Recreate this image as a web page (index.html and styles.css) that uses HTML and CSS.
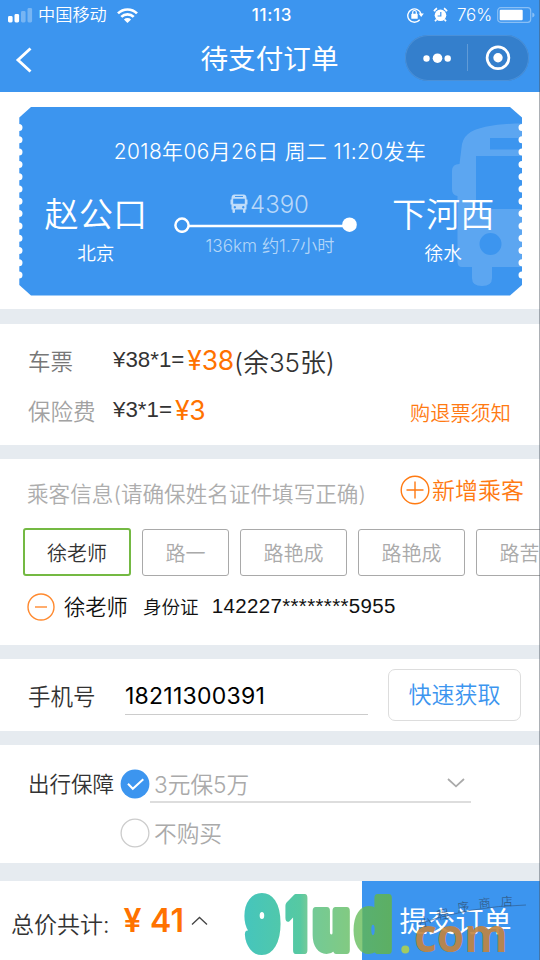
FILE: index.html
```
<!DOCTYPE html>
<html lang="zh-CN">
<head>
<meta charset="utf-8">
<title>待支付订单</title>
<link rel="stylesheet" href="styles.css">
</head>
<body>
<div class="screen">
  <header class="header">
    <div class="status">
      <div class="status-left">
        <svg width="25" height="15" viewBox="0 0 25 15" fill="#fff"><rect x="0" y="8" width="4.6" height="6.5" rx="1.4"/><rect x="6.5" y="6" width="4.6" height="8.5" rx="1.4"/><g opacity=".3"><rect x="13" y="3" width="4.6" height="11.5" rx="1.4"/><rect x="19.5" y="0" width="4.6" height="14.5" rx="1.4"/></g></svg>
        <span class="carrier">中国移动</span>
        <svg class="wifi" width="21" height="15" viewBox="0 0 21 15" fill="none" stroke="#fff" stroke-width="2.7"><path d="M1 5.4a13.5 13.5 0 0 1 19 0M4.3 8.9a8.8 8.8 0 0 1 12.4 0"/><path d="M6.9 11.4a5.1 5.1 0 0 1 7.2 0L10.500 15z" fill="#fff" stroke="none"/></svg>
      </div>
      <span class="clock">11:13</span>
      <div class="status-right">
        <svg width="17" height="16" viewBox="0 0 17 16"><path d="M12.700 12.800A6.700 6.700 0 1 1 14 7" fill="none" stroke="#fff" stroke-width="1.400"/><path d="M11.600 6.500h5.200l-2.600 3.400z" fill="#fff"/><rect x="4.300" y="6.800" width="6.400" height="5" rx=".6" fill="#fff"/><path d="M5.700 7V5.300a1.800 1.800 0 0 1 3.600 0V7" fill="none" stroke="#fff" stroke-width="1.200"/></svg>
        <svg class="alarm" width="15" height="16" viewBox="0 0 15 16"><circle cx="7.500" cy="8.300" r="5.800" fill="#fff"/><path d="M1 4.200a9 9 0 0 1 3-3M14 4.200a9 9 0 0 0-3-3M3.500 12.500 2 14.300M11.500 12.500l1.500 1.800" stroke="#fff" stroke-width="1.700" fill="none"/><path d="M7.800 5v4H4.600" stroke="#3c95ef" stroke-width="1.200" fill="none"/></svg>
        <span class="percent">76%</span>
        <svg width="38" height="16" viewBox="0 0 38 16"><rect x=".7" y=".7" width="33" height="14.600" rx="3" fill="none" stroke="#fff" stroke-opacity=".4" stroke-width="1.200"/><rect x="2.700" y="2.700" width="23" height="10.600" rx="1" fill="#fff"/><path d="M35.300 5.500q2.300.6 2.300 2.500t-2.300 2.500z" fill="#fff" opacity=".4"/></svg>
      </div>
    </div>
    <div class="nav">
      <svg class="back" width="18" height="28" viewBox="0 0 18 28"><path d="M15.500 2.500 3 14l12.500 11.500" fill="none" stroke="#fff" stroke-width="2.900"/></svg>
      <h1>待支付订单</h1>
      <div class="capsule">
        <svg width="124" height="46" viewBox="0 0 124 46" fill="#fff"><circle cx="21.500" cy="23.500" r="3.200"/><circle cx="32.500" cy="23.200" r="4.800"/><circle cx="42.700" cy="23.500" r="3.200"/><path d="M62.500 9v27" stroke="#fff" stroke-opacity=".22"/><circle cx="93" cy="22.800" r="10.900" fill="none" stroke="#fff" stroke-width="2.700"/><circle cx="93" cy="22.800" r="4.700"/></svg>
      </div>
    </div>
  </header>

  <section class="trip">
    <div class="ticket">
      <svg class="ticket-bg" width="503" height="189" viewBox="0 0 503 189">
        <path d="M12 0H491L503 10.500V178L491 188.500H12L.3 178V10.500z" fill="#3c95ef"/>
        <path fill="#fff" fill-opacity=".17" fill-rule="evenodd" d="M503 16.500C485 16.500 458 19 449 27Q443 32 442.500 41L440.500 57Q433 57 433 64V82Q433 88 438.500 89L438.500 137V155Q438.500 160 443 160H453V171Q453 179 463 179Q473 179 473 171V160H503V102H457V49H503V42.500H471V31H503zM482.500 137a11 11 0 1 1-22 0a11 11 0 1 1 22 0z"/>
        <path d="M0 20.500V170M503 20.500V170" stroke="#fff" stroke-width="7" stroke-linecap="round" stroke-dasharray="0 12.300"/>
      </svg>
      <div class="depart">2018年06月26日 周二 11:20发车</div>
      <div class="route">
        <div class="place"><div class="station">赵公口</div><div class="city">北京</div></div>
        <div class="leg">
          <div class="bus-no">
            <svg width="18" height="20" viewBox="0 0 18 20"><path fill="#fff" fill-opacity=".68" fill-rule="evenodd" d="M4.500.5h9Q16.500.5 16.500 4v1.500h1v5h-1V15.500h-1V18q0 1-1.200 1T13 18v-2.500H5V18q0 1-1.300 1T2.500 18v-2.500h-1v-5h-1v-5h1V4Q1.500.5 4.500.5zM5 2v1h8V2zM3.200 4.700v5h11.600v-5zM4.800 12a1.200 1.200 0 1 0 .1 0zM13.200 12a1.200 1.200 0 1 0 .1 0z"/></svg>
            <span>4390</span>
          </div>
          <svg class="leg-line" width="184" height="16" viewBox="0 0 184 16"><path d="M14 9H170" stroke="#fff" stroke-width="2.600"/><circle cx="8" cy="8.200" r="6.600" fill="none" stroke="#fff" stroke-width="2.500"/><circle cx="175.500" cy="7.700" r="7.300" fill="#fff"/></svg>
          <div class="distance">136km 约1.7小时</div>
        </div>
        <div class="place"><div class="station">下河西</div><div class="city">徐水</div></div>
      </div>
    </div>
  </section>

  <section class="fees">
    <div class="fee"><span class="label dark">车票</span><span class="calc">¥38*1=</span><span class="price">¥38</span><span class="remain">(余35张)</span></div>
    <div class="fee second"><span class="label">保险费</span><span class="calc">¥3*1=</span><span class="price">¥3</span><a class="notice">购退票须知</a></div>
  </section>

  <section class="passengers">
    <div class="pass-head">
      <span class="hint">乘客信息(请确保姓名证件填写正确)</span>
      <a class="add"><svg width="30" height="30" viewBox="0 0 30 30" fill="none" stroke="#ff7a12" stroke-width="1.400"><circle cx="15" cy="15" r="13.800"/><path d="M6.500 15h17M15 6.500v17"/></svg><span>新增乘客</span></a>
    </div>
    <div class="tabs">
      <div class="tab active">徐老师</div><div class="tab">路一</div><div class="tab">路艳成</div><div class="tab">路艳成</div><div class="tab">路苦</div>
    </div>
    <div class="person">
      <svg width="28" height="28" viewBox="0 0 28 28" fill="none" stroke="#ff8a30" stroke-width="1.400"><circle cx="14" cy="14" r="13"/><path d="M8 14h12"/></svg>
      <span class="name">徐老师</span><span class="id-type">身份证</span><span class="id-no">142227********5955</span>
    </div>
  </section>

  <section class="phone">
    <span class="label black">手机号</span>
    <div class="phone-no">18211300391</div>
    <div class="quick">快速获取</div>
  </section>

  <section class="insurance">
    <span class="ins-title">出行保障</span>
    <div class="options">
      <div class="option">
        <svg width="30" height="30" viewBox="0 0 30 30"><circle cx="15" cy="15" r="14.400" fill="#3c95ef"/><path d="m8 14.800 4.800 5L23.300 10.300" fill="none" stroke="#fff" stroke-width="2"/></svg>
        <div class="select"><span>3元保5万</span><svg width="18" height="10" viewBox="0 0 18 10"><path d="m1 1 8 7.300L17 1" fill="none" stroke="#aaa" stroke-width="1.800"/></svg></div>
      </div>
      <div class="option none">
        <svg width="30" height="30" viewBox="0 0 30 30"><circle cx="15" cy="15" r="13.900" fill="none" stroke="#ccc" stroke-width="1.300"/></svg>
        <span class="no-buy">不购买</span>
      </div>
    </div>
  </section>

  <footer class="footer">
    <span class="total-label">总价共计:</span><span class="total">¥ 41</span>
    <svg class="up" width="17" height="10" viewBox="0 0 17 10"><path d="m1 8.500 7.500-7L16 8.500" fill="none" stroke="#444" stroke-width="1.300"/></svg>
    <div class="submit">提交订单</div>
    <svg class="watermark" width="300" height="79" viewBox="240 881 300 79">
      <defs><linearGradient id="brand" gradientUnits="userSpaceOnUse" x1="243" y1="0" x2="393" y2="0"><stop offset="0" stop-color="#45c5bd"/><stop offset=".38" stop-color="#56c9a2"/><stop offset=".42" stop-color="#70ca9a"/><stop offset=".79" stop-color="#87ca7b"/><stop offset=".8" stop-color="#59b071"/><stop offset="1" stop-color="#5daf62"/></linearGradient></defs>
      <g class="brand" fill="url(#brand)" stroke="url(#brand)">
        <text x="245.500" y="949.500" textLength="34" lengthAdjust="spacingAndGlyphs">9</text>
        <text x="286" y="949.500" textLength="21" lengthAdjust="spacingAndGlyphs">1</text>
        <text x="313" y="949.500" textLength="36.500" lengthAdjust="spacingAndGlyphs">u</text>
        <text x="355" y="949.500" textLength="36.500" lengthAdjust="spacingAndGlyphs">d</text>
      </g>
      <circle cx="405.300" cy="949.500" r="4" fill="#a2ca62"/>
      <text class="com" x="414" y="951.500" textLength="94" lengthAdjust="spacingAndGlyphs">com</text>
      <g class="shop"><text transform="translate(420 927) rotate(-12)">小</text><text transform="translate(438 920) rotate(-12)">程</text><text transform="translate(458 912) rotate(-8)">序</text><text transform="translate(479 908) rotate(-5)">商</text><text transform="translate(501 906) rotate(-3)">店</text></g>
      <path d="M418 924Q470 906 526 905" stroke="#315f91" stroke-width=".7" fill="none"/>
    </svg>
  </footer>
  <div class="edge"></div>
</div>
</body>
</html>
```
FILE: styles.css
```
* { box-sizing: border-box; }
body { margin: 0; font-family: Inter, "Noto Sans CJK SC", sans-serif; font-weight: 350; background: #e6ebf0; }
svg { display: block; flex: none; }
.screen { position: relative; width: 540px; height: 960px; overflow: hidden; display: flex; flex-direction: column; white-space: nowrap; }
.screen > section, .header, .footer { flex: none; }
section { background: #fff; }

.header { height: 92px; background: #3c95ef; color: #fff; }
.status { height: 30px; display: grid; grid-template-columns: 1fr auto 1fr; align-items: center; padding: 0 4px 0 8px; }
.status-left, .status-right { display: flex; align-items: center; }
.status-right { justify-content: flex-end; margin-right: 1px; }
.carrier { font-size: 17.200px; line-height: 24px; margin: 0 0 0 5px; }
.wifi { margin-left: 10px; }
.clock { font-size: 17px; font-weight: 500; letter-spacing: .7px; }
.alarm { margin-left: 9px; }
.percent { font-size: 17px; letter-spacing: -.1px; margin: 0 5px 0 9px; }
.nav { position: relative; height: 58px; display: flex; align-items: center; justify-content: center; }
.nav h1 { margin: 0 1px 0 0; font-size: 27.600px; font-weight: 400; line-height: 40px; }
.back { position: absolute; left: 15px; top: 16px; }
.capsule { position: absolute; left: 405px; top: 5px; width: 124px; height: 46px; border-radius: 23px; background: #347fcc; box-shadow: inset 0 0 0 1px #4a90d8; }

.trip { height: 217px; padding: 14.500px 18.500px 0; margin-bottom: 15px; }
.ticket { position: relative; height: 189px; padding-top: 30px; color: #fff; }
.ticket-bg { position: absolute; left: 0; top: 0; }
.depart, .route { position: relative; }
.depart { font-size: 20.900px; letter-spacing: .4px; line-height: 30px; text-align: center; }
.route { display: flex; justify-content: space-between; padding: 23px 27px 0 26px; }
.place { text-align: center; }
.station { font-size: 34.200px; line-height: 50px; }
.city { font-size: 18.600px; line-height: 26px; }
.leg { display: flex; flex-direction: column; align-items: center; margin: 1px 4px 0 -4px; }
.leg-line { transform: translateY(-1px); }
.bus-no { display: flex; align-items: center; font-size: 24px; line-height: 27px; color: #b9d8f9; gap: 2px; margin-left: 8px; }
.distance { font-size: 17.200px; line-height: 24px; color: #b3d5f8; margin-left: 9px; }

.fees { height: 121px; margin-bottom: 14px; padding: 11px 29px 0 28px; }
.fee { display: flex; align-items: center; height: 50px; }
.label { width: 85px; font-size: 22.500px; color: #a2a2a2; }
.label.dark { color: #777; }
.label.black { color: #333; width: 97px; }
.calc { font-family: "Liberation Sans", sans-serif; font-size: 22.300px; font-weight: 400; color: #333; }
.price { font-size: 26.500px; color: #ff7200; margin-left: 3px; font-weight: 400; letter-spacing: -.2px; }
.remain { font-size: 26px; letter-spacing: -.1px; color: #333; }
.notice { font-size: 20.200px; color: #ff7a12; margin-left: auto; padding-top: 4px; }

.passengers { height: 186px; margin-bottom: 14px; }
.pass-head { display: flex; justify-content: space-between; align-items: center; height: 62px; padding: 0 16px 0 27px; }
.hint { font-size: 21.600px; color: #adadad; padding-top: 4px; }
.add { display: flex; align-items: center; gap: 2px; font-size: 23px; color: #ff7a12; }
.add span { margin-top: -2px; }
.tabs { display: flex; align-items: flex-end; gap: 11px; height: 55px; padding-left: 23px; }
.tab { flex: none; height: 47px; line-height: 48px; padding: 0 22.500px; border: 1px solid #a9a9a9; border-radius: 3px; font-size: 20px; color: #aaa; }
.tab.active { height: 48px; padding: 0 22px; border: 2px solid #74b943; color: #333; }
.person { display: flex; align-items: center; height: 60px; padding-left: 27px; color: #111; }
.person svg { margin-top: 1px; }
.name { font-size: 21.300px; margin: -2px 0 0 9px; }
.id-type { font-size: 18.600px; margin: -2px 0 0 15px; }
.id-no { font-family: "Liberation Sans", sans-serif; font-weight: 400; font-size: 20.500px; letter-spacing: .35px; margin-left: 13px; }

.phone { display: flex; align-items: center; height: 72px; margin-bottom: 14px; padding-left: 28px; }
.phone-no { width: 243px; height: 40px; line-height: 42px; border-bottom: 1px solid #ccc; font-size: 23px; font-weight: 400; letter-spacing: .25px; color: #000; }
.quick { width: 133px; height: 52px; line-height: 50px; border: 1px solid #ddd; border-radius: 7px; margin-left: 20px; text-align: center; font-size: 23px; color: #3c95ef; }

.insurance { display: flex; height: 118px; margin-bottom: 18px; padding: 18px 0 0 28px; }
.ins-title { font-size: 21.500px; line-height: 42px; color: #333; width: 92px; }
.option { display: flex; align-items: center; color: #aaa; font-size: 22.700px; height: 42px; }
.select { display: flex; justify-content: space-between; align-items: center; width: 321px; height: 38px; border-bottom: 2px solid #ddd; padding: 0 6px 0 4px; }
.option.none { margin-top: 7px; }
.no-buy { font-size: 22.700px; margin: -2px 0 0 4px; }

.footer { position: relative; display: flex; align-items: center; height: 79px; background: #fff; padding-left: 11px; }
.total-label { font-size: 23px; color: #333; padding-top: 5px; }
.total { font-size: 32px; font-weight: 600; color: #ff7200; margin-left: 14px; letter-spacing: .2px; }
.up { margin-left: 7px; }
.submit { width: 178px; height: 79px; margin-left: auto; background: #3c95ef; color: #fff; font-size: 28px; line-height: 82px; font-weight: 400; text-align: center; padding-left: 9px; }
.watermark { position: absolute; left: 240px; top: 0; }
.brand { font-family: Inter, sans-serif; font-weight: 900; font-size: 72px; stroke-width: 8px; stroke-linejoin: round; }
.com { font-family: "Open Sans", sans-serif; font-weight: 700; font-size: 46px; fill: #c28440; fill-opacity: .92; }
.shop text { font-family: "Noto Sans CJK SC", sans-serif; font-weight: 300; font-size: 12px; fill: #315174; }
.edge { position: absolute; right: 0; top: 0; width: 1px; height: 960px; background: rgba(70, 80, 90, .45); }
```
